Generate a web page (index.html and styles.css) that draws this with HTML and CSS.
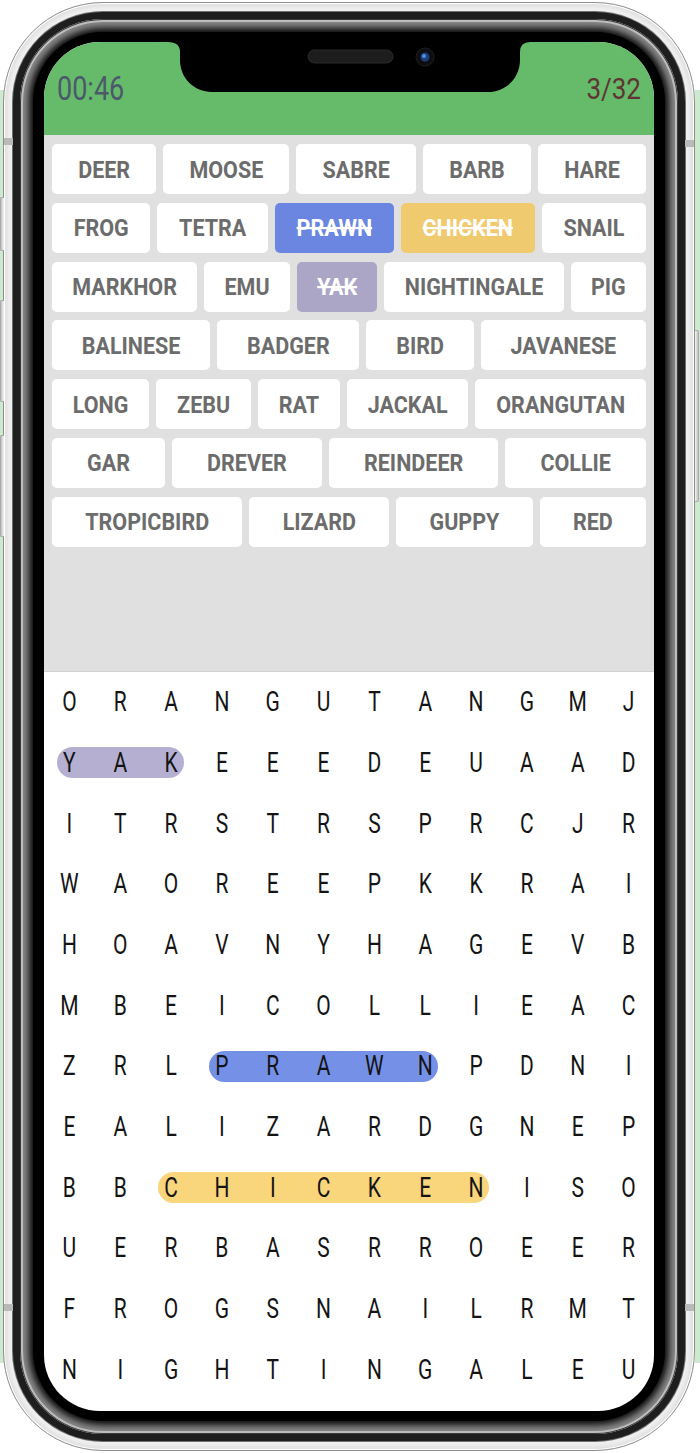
FILE: index.html
```html
<!DOCTYPE html>
<html lang="en">
<head>
<meta charset="utf-8">
<title>Word Search</title>
<link rel="stylesheet" href="styles.css">
</head>
<body>
<div class="edge edge-l"></div>
<div class="edge edge-r"></div>
<div class="phone">
  <div class="btn btn-l b1"></div>
  <div class="btn btn-l b2"></div>
  <div class="btn btn-l b3"></div>
  <div class="btn btn-r b4"></div>
  <div class="ant ant-lt"></div>
  <div class="ant ant-rt"></div>
  <div class="ant ant-lb"></div>
  <div class="ant ant-rb"></div>
  <div class="rim">
    <div class="metal">
      <div class="bezel">
        <div class="screen">
          <header class="top">
            <span class="timer">00:46</span>
            <span class="count">3/32</span>
          </header>
          <svg class="notch" width="610" height="52" viewBox="0 0 610 52">
            <path d="M124 0 H486 Q476 0 476 10 V18 C476 36 462 50 444 50 H168 C150 50 136 36 136 18 V10 Q136 0 124 0 Z" fill="#000"/>
            <rect x="264" y="8" width="85" height="13" rx="6.5" fill="#1d1d1d" stroke="#2a2a2a" stroke-width="1"/>
            <circle cx="381" cy="15" r="9" fill="#0d0d12" stroke="#1f1f24" stroke-width="1"/>
            <circle cx="381" cy="15" r="4.5" fill="#1c3f7a"/>
            <circle cx="380" cy="14" r="2" fill="#4f8fe6"/>
          </svg>
          <section class="words">
            <div class="row">
              <div class="chip"><span>DEER</span></div>
              <div class="chip"><span>MOOSE</span></div>
              <div class="chip"><span>SABRE</span></div>
              <div class="chip"><span>BARB</span></div>
              <div class="chip"><span>HARE</span></div>
            </div>
            <div class="row">
              <div class="chip"><span>FROG</span></div>
              <div class="chip"><span>TETRA</span></div>
              <div class="chip found blue"><span>PRAWN</span></div>
              <div class="chip found yellow"><span>CHICKEN</span></div>
              <div class="chip"><span>SNAIL</span></div>
            </div>
            <div class="row">
              <div class="chip"><span>MARKHOR</span></div>
              <div class="chip"><span>EMU</span></div>
              <div class="chip found purple"><span>YAK</span></div>
              <div class="chip"><span>NIGHTINGALE</span></div>
              <div class="chip"><span>PIG</span></div>
            </div>
            <div class="row">
              <div class="chip"><span>BALINESE</span></div>
              <div class="chip"><span>BADGER</span></div>
              <div class="chip"><span>BIRD</span></div>
              <div class="chip"><span>JAVANESE</span></div>
            </div>
            <div class="row">
              <div class="chip"><span>LONG</span></div>
              <div class="chip"><span>ZEBU</span></div>
              <div class="chip"><span>RAT</span></div>
              <div class="chip"><span>JACKAL</span></div>
              <div class="chip"><span>ORANGUTAN</span></div>
            </div>
            <div class="row">
              <div class="chip"><span>GAR</span></div>
              <div class="chip"><span>DREVER</span></div>
              <div class="chip"><span>REINDEER</span></div>
              <div class="chip"><span>COLLIE</span></div>
            </div>
            <div class="row">
              <div class="chip"><span>TROPICBIRD</span></div>
              <div class="chip"><span>LIZARD</span></div>
              <div class="chip"><span>GUPPY</span></div>
              <div class="chip"><span>RED</span></div>
            </div>
          </section>
          <section class="board">
            <span class="c"><i>O</i></span><span class="c"><i>R</i></span><span class="c"><i>A</i></span><span class="c"><i>N</i></span><span class="c"><i>G</i></span><span class="c"><i>U</i></span><span class="c"><i>T</i></span><span class="c"><i>A</i></span><span class="c"><i>N</i></span><span class="c"><i>G</i></span><span class="c"><i>M</i></span><span class="c"><i>J</i></span>
            <span class="c hl yak s"><i>Y</i></span><span class="c hl yak"><i>A</i></span><span class="c hl yak e"><i>K</i></span><span class="c"><i>E</i></span><span class="c"><i>E</i></span><span class="c"><i>E</i></span><span class="c"><i>D</i></span><span class="c"><i>E</i></span><span class="c"><i>U</i></span><span class="c"><i>A</i></span><span class="c"><i>A</i></span><span class="c"><i>D</i></span>
            <span class="c"><i>I</i></span><span class="c"><i>T</i></span><span class="c"><i>R</i></span><span class="c"><i>S</i></span><span class="c"><i>T</i></span><span class="c"><i>R</i></span><span class="c"><i>S</i></span><span class="c"><i>P</i></span><span class="c"><i>R</i></span><span class="c"><i>C</i></span><span class="c"><i>J</i></span><span class="c"><i>R</i></span>
            <span class="c"><i>W</i></span><span class="c"><i>A</i></span><span class="c"><i>O</i></span><span class="c"><i>R</i></span><span class="c"><i>E</i></span><span class="c"><i>E</i></span><span class="c"><i>P</i></span><span class="c"><i>K</i></span><span class="c"><i>K</i></span><span class="c"><i>R</i></span><span class="c"><i>A</i></span><span class="c"><i>I</i></span>
            <span class="c"><i>H</i></span><span class="c"><i>O</i></span><span class="c"><i>A</i></span><span class="c"><i>V</i></span><span class="c"><i>N</i></span><span class="c"><i>Y</i></span><span class="c"><i>H</i></span><span class="c"><i>A</i></span><span class="c"><i>G</i></span><span class="c"><i>E</i></span><span class="c"><i>V</i></span><span class="c"><i>B</i></span>
            <span class="c"><i>M</i></span><span class="c"><i>B</i></span><span class="c"><i>E</i></span><span class="c"><i>I</i></span><span class="c"><i>C</i></span><span class="c"><i>O</i></span><span class="c"><i>L</i></span><span class="c"><i>L</i></span><span class="c"><i>I</i></span><span class="c"><i>E</i></span><span class="c"><i>A</i></span><span class="c"><i>C</i></span>
            <span class="c"><i>Z</i></span><span class="c"><i>R</i></span><span class="c"><i>L</i></span><span class="c hl prawn s"><i>P</i></span><span class="c hl prawn"><i>R</i></span><span class="c hl prawn"><i>A</i></span><span class="c hl prawn"><i>W</i></span><span class="c hl prawn e"><i>N</i></span><span class="c"><i>P</i></span><span class="c"><i>D</i></span><span class="c"><i>N</i></span><span class="c"><i>I</i></span>
            <span class="c"><i>E</i></span><span class="c"><i>A</i></span><span class="c"><i>L</i></span><span class="c"><i>I</i></span><span class="c"><i>Z</i></span><span class="c"><i>A</i></span><span class="c"><i>R</i></span><span class="c"><i>D</i></span><span class="c"><i>G</i></span><span class="c"><i>N</i></span><span class="c"><i>E</i></span><span class="c"><i>P</i></span>
            <span class="c"><i>B</i></span><span class="c"><i>B</i></span><span class="c hl chicken s"><i>C</i></span><span class="c hl chicken"><i>H</i></span><span class="c hl chicken"><i>I</i></span><span class="c hl chicken"><i>C</i></span><span class="c hl chicken"><i>K</i></span><span class="c hl chicken"><i>E</i></span><span class="c hl chicken e"><i>N</i></span><span class="c"><i>I</i></span><span class="c"><i>S</i></span><span class="c"><i>O</i></span>
            <span class="c"><i>U</i></span><span class="c"><i>E</i></span><span class="c"><i>R</i></span><span class="c"><i>B</i></span><span class="c"><i>A</i></span><span class="c"><i>S</i></span><span class="c"><i>R</i></span><span class="c"><i>R</i></span><span class="c"><i>O</i></span><span class="c"><i>E</i></span><span class="c"><i>E</i></span><span class="c"><i>R</i></span>
            <span class="c"><i>F</i></span><span class="c"><i>R</i></span><span class="c"><i>O</i></span><span class="c"><i>G</i></span><span class="c"><i>S</i></span><span class="c"><i>N</i></span><span class="c"><i>A</i></span><span class="c"><i>I</i></span><span class="c"><i>L</i></span><span class="c"><i>R</i></span><span class="c"><i>M</i></span><span class="c"><i>T</i></span>
            <span class="c"><i>N</i></span><span class="c"><i>I</i></span><span class="c"><i>G</i></span><span class="c"><i>H</i></span><span class="c"><i>T</i></span><span class="c"><i>I</i></span><span class="c"><i>N</i></span><span class="c"><i>G</i></span><span class="c"><i>A</i></span><span class="c"><i>L</i></span><span class="c"><i>E</i></span><span class="c"><i>U</i></span>
          </section>
        </div>
      </div>
    </div>
  </div>
</div>
</body>
</html>
```

FILE: styles.css
```css
* {
  box-sizing: border-box;
  margin: 0;
  padding: 0;
}

body {
  width: 700px;
  height: 1453px;
  overflow: hidden;
  background: #ffffff;
  font-family: Roboto, "Noto Sans", "Liberation Sans", sans-serif;
  position: relative;
}

/* pale green slivers showing beside the frame */
.edge {
  position: absolute;
  width: 5px;
  top: 90px;
  bottom: 90px;
  background: #cdeacf;
}
.edge-l { left: 0; }
.edge-r { right: 0; }

/* ---------- phone frame ---------- */
.phone {
  position: relative;
  width: 692px;
  height: 1449px;
  margin: 2px 0 0 3px;
  border-radius: 100px;
  border: 1px solid #8e8e8e;
  padding: 9px;
  background: #efefef;
  box-shadow: inset 0 0 0 1px #ffffff, inset 0 0 3px 4px #e2e2e2;
  display: flex;
}

.btn {
  position: absolute;
  width: 4px;
  background: linear-gradient(90deg, #c2c2c2, #f4f4f4);
  border: 1px solid #a9a9a9;
}
.btn-l { left: -4px; border-radius: 2px 0 0 2px; border-right: none; }
.btn-r { right: -5px; border-radius: 0 2px 2px 0; border-left: none; background: linear-gradient(90deg, #f4f4f4, #c2c2c2); }
.b1 { top: 194px; height: 54px; }
.b2 { top: 297px; height: 102px; }
.b3 { top: 432px; height: 102px; }
.b4 { top: 327px; height: 172px; }

.ant {
  position: absolute;
  width: 9px;
  height: 7px;
  background: #b9b9b9;
}
.ant-lt { left: 0; top: 135px; }
.ant-rt { right: 0; top: 137px; }
.ant-lb { left: 0; top: 1301px; }
.ant-rb { right: 0; top: 1301px; }

.rim {
  flex: 1;
  display: flex;
  border-radius: 90px;
  background: #1e1e1e;
  padding: 7px;
  box-shadow: 0 0 0 1px #6f6f6f;
}

.metal {
  flex: 1;
  display: flex;
  border-radius: 83px;
  background: #080808;
  padding: 13px;
  box-shadow: inset 0 0 0 1px #3a3a3a, inset 0 0 0 3px #bdbdbd, inset 0 0 7px 9px #8a8a8a;
}

.bezel {
  flex: 1;
  display: flex;
  border-radius: 70px;
  background: #000;
  padding: 10px 11px;
}

.screen {
  flex: 1;
  position: relative;
  border-radius: 56px;
  overflow: hidden;
  background: #ffffff;
  display: flex;
  flex-direction: column;
}

/* ---------- header ---------- */
.top {
  flex: none;
  height: 93px;
  background: #66bb6a;
  display: flex;
  align-items: center;
  justify-content: space-between;
  padding: 0 13px 0 13px;
  font-size: 27px;
  font-weight: 400;
}

.timer {
  display: inline-block;
  color: #4b596b;
  transform: scaleY(1.22);
}

.count {
  display: inline-block;
  color: #5e3434;
  font-size: 26px;
  transform: scaleY(1.15);
}

.notch {
  position: absolute;
  top: 0;
  left: 0;
}

/* ---------- word list ---------- */
.words {
  flex: none;
  height: 537px;
  background: #e0e0e0;
  border-bottom: 1px solid #d0d0d0;
  padding: 9px 8px 0 8px;
  display: flex;
  flex-direction: column;
  gap: 8.8px;
}

.row {
  display: flex;
  gap: 7px;
}

.chip {
  flex: 1 1 auto;
  height: 50px;
  background: #ffffff;
  border-radius: 5px;
  display: flex;
  align-items: center;
  justify-content: center;
  padding: 0 8px;
  font-size: 21.5px;
  font-weight: 700;
  color: #6c6c6c;
}

.chip span {
  display: inline-block;
  transform: scaleY(1.14);
}

.found span {
  color: #ffffff;
  text-decoration: line-through;
  text-decoration-thickness: 2px;
}

.blue { background: #6a86e0; }
.yellow { background: #f0ca6e; }
.purple { background: #aba5c6; }

/* ---------- letter board ---------- */
.board {
  flex: 1;
  display: grid;
  grid-template-columns: repeat(12, 1fr);
  grid-template-rows: repeat(12, 60.67px);
  align-content: start;
}

.c {
  position: relative;
  display: flex;
  align-items: center;
  justify-content: center;
  font-size: 21px;
  color: #141414;
}

.c i {
  position: relative;
  z-index: 1;
  display: inline-block;
  font-style: normal;
  transform: scaleY(1.28);
}

.hl::before {
  content: "";
  position: absolute;
  left: -0.5px;
  right: -0.5px;
  top: 50%;
  height: 31px;
  margin-top: -15.5px;
  background: var(--hl);
}

.hl.s::before {
  left: 12.5px;
  border-radius: 15.5px 0 0 15.5px;
}

.hl.e::before {
  right: 12.5px;
  border-radius: 0 15.5px 15.5px 0;
}

.yak { --hl: #b5b0d2; }
.prawn { --hl: #7591e7; }
.chicken { --hl: #f9d57c; }
```
